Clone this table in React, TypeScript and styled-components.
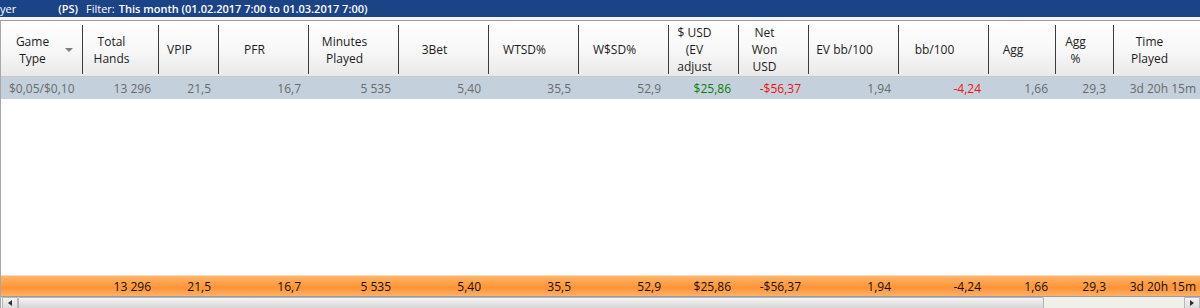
import React from 'react'
import styled, { createGlobalStyle } from 'styled-components'

const GlobalStyle = createGlobalStyle`
	html, body {
		margin: 0;
		padding: 0;
		background: #ffffff;
	}
	body {
		font-family: "Open Sans", "Noto Sans", sans-serif;
	}
`

interface Column {
	title: string[]
	width: number
	sortable?: boolean
}

interface Cell {
	text: string
	tone?: 'gain' | 'loss'
	align?: 'left' | 'right'
}

const columns: Column[] = [
	{title: ['Game', 'Type'], width: 82, sortable: true},
	{title: ['Total', 'Hands'], width: 76},
	{title: ['VPIP'], width: 60},
	{title: ['PFR'], width: 90},
	{title: ['Minutes', 'Played'], width: 90},
	{title: ['3Bet'], width: 90},
	{title: ['WTSD%'], width: 90},
	{title: ['W$SD%'], width: 90},
	{title: ['$ USD', '(EV', 'adjust'], width: 70},
	{title: ['Net', 'Won', 'USD'], width: 70},
	{title: ['EV bb/100'], width: 90},
	{title: ['bb/100'], width: 90},
	{title: ['Agg'], width: 67},
	{title: ['Agg', '%'], width: 58},
	{title: ['Time', 'Played'], width: 90},
]

const gridTemplate = columns.map(c => `${c.width}px`).join(' ')

const rowCells: Cell[] = [
	{text: '$0,05/$0,10', align: 'left'},
	{text: '13 296'},
	{text: '21,5'},
	{text: '16,7'},
	{text: '5 535'},
	{text: '5,40'},
	{text: '35,5'},
	{text: '52,9'},
	{text: '$25,86', tone: 'gain'},
	{text: '-$56,37', tone: 'loss'},
	{text: '1,94'},
	{text: '-4,24', tone: 'loss'},
	{text: '1,66'},
	{text: '29,3'},
	{text: '3d 20h 15m'},
]

const totalCells: Cell[] = [
	{text: ''},
	{text: '13 296'},
	{text: '21,5'},
	{text: '16,7'},
	{text: '5 535'},
	{text: '5,40'},
	{text: '35,5'},
	{text: '52,9'},
	{text: '$25,86'},
	{text: '-$56,37'},
	{text: '1,94'},
	{text: '-4,24'},
	{text: '1,66'},
	{text: '29,3'},
	{text: '3d 20h 15m'},
]

const Window = styled.div`
	width: 1200px;
	height: 308px;
	display: flex;
	flex-direction: column;
	overflow: hidden;
	background: #ffffff;
`

const TitleBar = styled.div`
	height: 17px;
	flex: none;
	display: flex;
	align-items: center;
	background: #1b4487;
	color: #ffffff;
	font-size: 11px;
	white-space: nowrap;
`

const TitleText = styled.span<{bold?: boolean, gap?: number}>`
	font-weight: ${props => props.bold ? 600 : 400};
	margin-left: ${props => props.gap || 0}px;
`

const Gap = styled.div`
	height: 3px;
	flex: none;
	background: #f4f4f4;
`

const Table = styled.div`
	flex: 1;
	display: flex;
	flex-direction: column;
	border-top: 1px solid #9d9d9d;
	border-left: 1px solid #a8a8a8;
	min-height: 0;
`

const HeaderRow = styled.div`
	display: grid;
	grid-template-columns: ${gridTemplate};
	height: 55px;
	flex: none;
	background: linear-gradient(#ffffff 0%, #f7f7f7 55%, #e9e9e9 100%);
	border-bottom: 1px solid #c9c9c9;
`

const HeaderCell = styled.div`
	position: relative;
	margin: 4px 0 2px;
	padding-right: 18px;
	border-right: 1px solid #3c3c3c;
	display: flex;
	flex-direction: column;
	justify-content: center;
	align-items: center;
	color: #1c1c1c;
	font-size: 12px;
	line-height: 17px;
	white-space: nowrap;
	overflow: hidden;
`

const SortArrow = styled.span`
	position: absolute;
	right: 9px;
	top: 23px;
	width: 0;
	height: 0;
	border-left: 4px solid transparent;
	border-right: 4px solid transparent;
	border-top: 4px solid #808080;
`

const ValueRow = styled.div<{variant: 'data' | 'total'}>`
	display: grid;
	grid-template-columns: ${gridTemplate};
	flex: none;
	height: ${props => props.variant === 'data' ? 22 : 20}px;
	background: ${props => props.variant === 'data'
		? '#c4d1dc'
		: 'linear-gradient(#ffb56b 0%, #ff9b3f 45%, #ff9436 60%, #ffb16a 100%)'};
	border-top: ${props => props.variant === 'total' ? '1px solid #f3dcc6' : 'none'};
	border-bottom: ${props => props.variant === 'total' ? '1px solid #9c9c9c' : 'none'};
	color: ${props => props.variant === 'data' ? '#6a6a6a' : '#111111'};
	font-size: 12px;
`

const ValueCell = styled.div<{tone?: 'gain' | 'loss', align?: 'left' | 'right'}>`
	display: flex;
	align-items: center;
	justify-content: ${props => props.align === 'left' ? 'flex-start' : 'flex-end'};
	padding: 0 8px;
	white-space: nowrap;
	overflow: hidden;
	color: ${props => props.tone === 'gain' ? '#0b7d0b' : props.tone === 'loss' ? '#f01010' : 'inherit'};
`

const Body = styled.div`
	flex: 1;
	background: #ffffff;
`

const ScrollBar = styled.div`
	height: 11px;
	flex: none;
	display: flex;
	background: #f0f0eb;
	padding-left: 1px;
`

const ScrollButton = styled.div`
	width: 16px;
	flex: none;
	display: flex;
	align-items: center;
	justify-content: center;
	background: linear-gradient(#f4f4f4, #dcdcdc);
	border: 1px solid #b8b8b8;
	border-bottom: none;
	box-sizing: border-box;
`

const Arrow = styled.span<{dir: 'left' | 'right'}>`
	width: 0;
	height: 0;
	border-top: 3px solid transparent;
	border-bottom: 3px solid transparent;
	${props => props.dir === 'left'
		? 'border-right: 4px solid #303030;'
		: 'border-left: 4px solid #303030;'}
`

const Thumb = styled.div`
	width: 1026px;
	flex: none;
	background: linear-gradient(#f6f6f6 0%, #e4e4e4 50%, #d6d6d6 100%);
	border: 1px solid #b4b4b4;
	border-bottom: none;
	box-sizing: border-box;
	border-radius: 2px 2px 0 0;
`

const Track = styled.div`
	flex: 1;
`

function renderCells(cells: Cell[]) {
	return cells.map((cell, i) => (
		<ValueCell key={i} tone={cell.tone} align={cell.align}>{cell.text}</ValueCell>
	))
}

export default function App() {
	return (
		<>
			<GlobalStyle/>
			<Window>
				<TitleBar>
					<TitleText>yer</TitleText>
					<TitleText bold gap={42}>(PS)</TitleText>
					<TitleText gap={8}>Filter:</TitleText>
					<TitleText bold gap={4}>This month (01.02.2017 7:00 to 01.03.2017 7:00)</TitleText>
				</TitleBar>
				<Gap/>
				<Table>
					<HeaderRow>
						{columns.map((col, i) => (
							<HeaderCell key={i}>
								{col.title.map(line => <span key={line}>{line}</span>)}
								{col.sortable && <SortArrow/>}
							</HeaderCell>
						))}
					</HeaderRow>
					<ValueRow variant="data">{renderCells(rowCells)}</ValueRow>
					<Body/>
					<ValueRow variant="total">{renderCells(totalCells)}</ValueRow>
					<ScrollBar>
						<ScrollButton><Arrow dir="left"/></ScrollButton>
						<Thumb/>
						<Track/>
						<ScrollButton><Arrow dir="right"/></ScrollButton>
					</ScrollBar>
				</Table>
			</Window>
		</>
	)
}
